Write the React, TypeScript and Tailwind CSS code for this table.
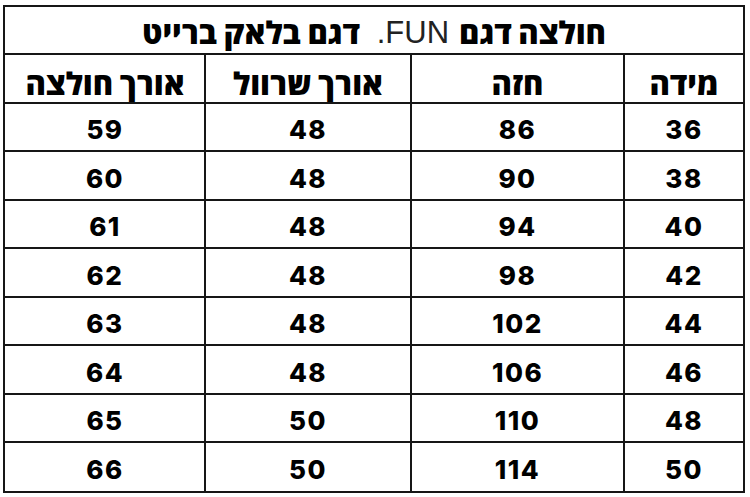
const headers = ['מידה', 'חזה', 'אורך שרוול', 'אורך חולצה'];

const rows = [
  ['36', '86', '48', '59'],
  ['38', '90', '48', '60'],
  ['40', '94', '48', '61'],
  ['42', '98', '48', '62'],
  ['44', '102', '48', '63'],
  ['46', '106', '48', '64'],
  ['48', '110', '50', '65'],
  ['50', '114', '50', '66'],
];

// row heights incl. bottom line, last one has none
const rowClass = [
  'h-[48px] border-b-2',
  'h-[49px] border-b-2',
  'h-[48px] border-b-2',
  'h-[49px] border-b-2',
  'h-[48px] border-b-2',
  'h-[49px] border-b-2',
  'h-[48px] border-b-2',
  'h-[48px]',
];

const cols = 'grid grid-cols-[120px_213px_206px_198px]';

function Cell({ children, last, className = '' }: { children: React.ReactNode; last?: boolean; className?: string }) {
  return (
    <div
      className={`flex items-center justify-center ${last ? '' : 'border-l-2 border-[#161616]'} ${className}`}
    >
      {children}
    </div>
  );
}

export default function App() {
  return (
    <div className="w-[750px] h-[497px] bg-white pt-[5px] pl-[3px]">
      <div
        dir="rtl"
        className="w-[742px] border-2 border-[#161616] text-black"
        style={{ fontFamily: "Inter, 'Open Sans', 'DejaVu Sans', sans-serif" }}
      >
        {/* title */}
        <div className="h-[48px] border-b-2 border-[#161616] flex items-center justify-center pt-[6px] text-[31px] font-extrabold">
          <span>חולצה דגם</span>
          <span
            className="font-medium text-[31px] text-[#222] mx-[10px]"
            style={{ fontFamily: "'Liberation Sans', Arial, sans-serif" }}
          >
            FUN.
          </span>
          <span>&nbsp;דגם בלאק ברייט</span>
        </div>

        {/* header */}
        <div className={`${cols} h-[49px] border-b-2 border-[#161616] text-[31px] font-extrabold`}>
          {headers.map((h, i) => (
            <Cell key={h} last={i === headers.length - 1} className="pt-[6px]">
              {h}
            </Cell>
          ))}
        </div>

        {rows.map((r, ri) => (
          <div key={ri} className={`${cols} ${rowClass[ri]} border-[#161616] text-[26px] font-extrabold tracking-[1.5px]`}>
            {r.map((v, i) => (
              <Cell key={i} last={i === r.length - 1} className="pt-[5px]">
                <span dir="ltr">{v}</span>
              </Cell>
            ))}
          </div>
        ))}
      </div>
    </div>
  );
}
